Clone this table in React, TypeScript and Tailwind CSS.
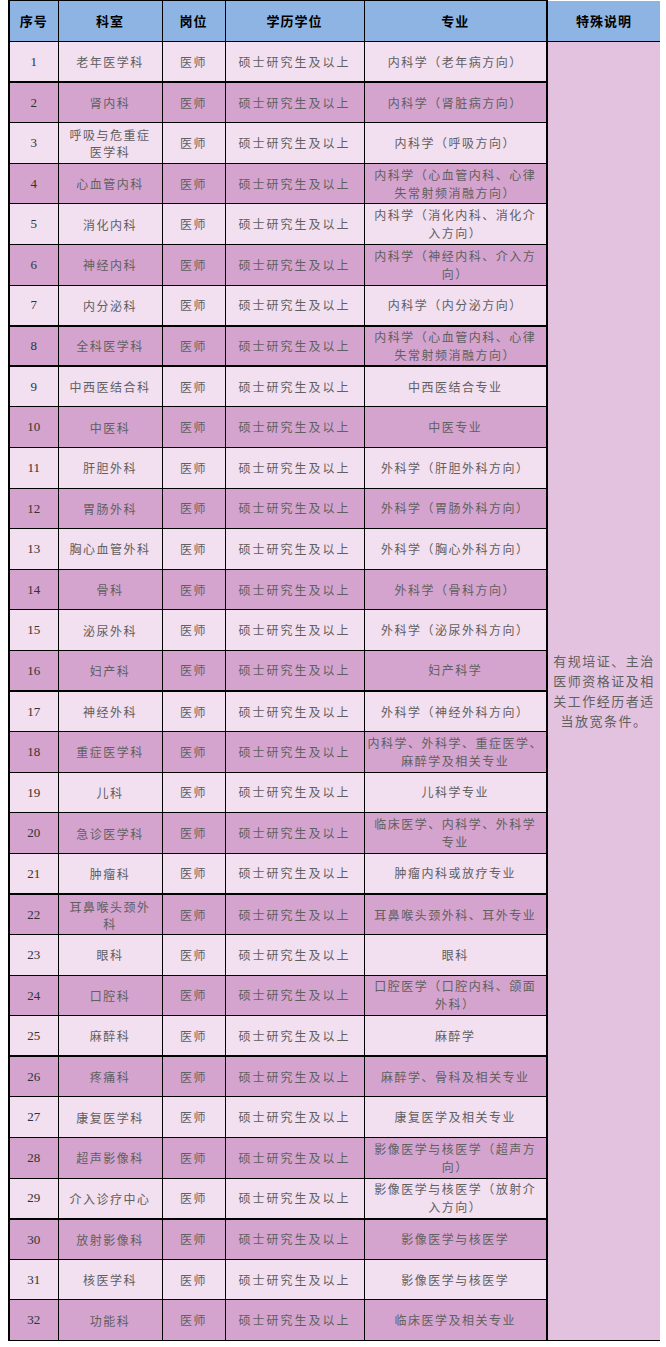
import React from "react"

type Row = { dept: string[]; major: string[] }

const rows: Row[] = [
  { dept: ["老年医学科"], major: ["内科学（老年病方向）"] },
  { dept: ["肾内科"], major: ["内科学（肾脏病方向）"] },
  { dept: ["呼吸与危重症", "医学科"], major: ["内科学（呼吸方向）"] },
  { dept: ["心血管内科"], major: ["内科学（心血管内科、心律", "失常射频消融方向）"] },
  { dept: ["消化内科"], major: ["内科学（消化内科、消化介", "入方向）"] },
  { dept: ["神经内科"], major: ["内科学（神经内科、介入方", "向）"] },
  { dept: ["内分泌科"], major: ["内科学（内分泌方向）"] },
  { dept: ["全科医学科"], major: ["内科学（心血管内科、心律", "失常射频消融方向）"] },
  { dept: ["中西医结合科"], major: ["中西医结合专业"] },
  { dept: ["中医科"], major: ["中医专业"] },
  { dept: ["肝胆外科"], major: ["外科学（肝胆外科方向）"] },
  { dept: ["胃肠外科"], major: ["外科学（胃肠外科方向）"] },
  { dept: ["胸心血管外科"], major: ["外科学（胸心外科方向）"] },
  { dept: ["骨科"], major: ["外科学（骨科方向）"] },
  { dept: ["泌尿外科"], major: ["外科学（泌尿外科方向）"] },
  { dept: ["妇产科"], major: ["妇产科学"] },
  { dept: ["神经外科"], major: ["外科学（神经外科方向）"] },
  { dept: ["重症医学科"], major: ["内科学、外科学、重症医学、", "麻醉学及相关专业"] },
  { dept: ["儿科"], major: ["儿科学专业"] },
  { dept: ["急诊医学科"], major: ["临床医学、内科学、外科学", "专业"] },
  { dept: ["肿瘤科"], major: ["肿瘤内科或放疗专业"] },
  { dept: ["耳鼻喉头颈外", "科"], major: ["耳鼻喉头颈外科、耳外专业"] },
  { dept: ["眼科"], major: ["眼科"] },
  { dept: ["口腔科"], major: ["口腔医学（口腔内科、颌面", "外科）"] },
  { dept: ["麻醉科"], major: ["麻醉学"] },
  { dept: ["疼痛科"], major: ["麻醉学、骨科及相关专业"] },
  { dept: ["康复医学科"], major: ["康复医学及相关专业"] },
  { dept: ["超声影像科"], major: ["影像医学与核医学（超声方", "向）"] },
  { dept: ["介入诊疗中心"], major: ["影像医学与核医学（放射介", "入方向）"] },
  { dept: ["放射影像科"], major: ["影像医学与核医学"] },
  { dept: ["核医学科"], major: ["影像医学与核医学"] },
  { dept: ["功能科"], major: ["临床医学及相关专业"] },
]

const thick = new Set([1, 7, 8, 16, 21, 25, 29])

function Lines({ parts }: { parts: string[] }) {
  return (
    <>
      {parts.map((p, i) => (
        <div key={i}>{p}</div>
      ))}
    </>
  )
}

export default function App() {
  const cjk = { fontFamily: '"Noto Sans CJK SC", sans-serif' }
  return (
    <div className="w-[666px] h-[1347px] bg-white pl-2" style={cjk}>
      <table className="table-fixed border-collapse w-[651px] text-[12px] text-[#606060]">
        <colgroup>
          <col className="w-[49px]" />
          <col className="w-[104px]" />
          <col className="w-[63px]" />
          <col className="w-[139px]" />
          <col className="w-[183px]" />
          <col className="w-[113px]" />
        </colgroup>
        <thead>
          <tr className="h-[41px] bg-[#8db4e2] text-black font-bold text-[13px] tracking-[1px]">
            <th className="border border-black border-l-2">序号</th>
            <th className="border border-black">科室</th>
            <th className="border border-black">岗位</th>
            <th className="border border-black">学历学位</th>
            <th className="border border-black">专业</th>
            <th className="border-b border-l-2 border-black">特殊说明</th>
          </tr>
        </thead>
        <tbody>
          {rows.map((r, i) => {
            const n = i + 1
            const bg = n % 2 === 1 ? "bg-[#f2dff0]" : "bg-[#d4a4cf]"
            const b = thick.has(n) ? "border-b-2" : "border-b"
            return (
              <tr key={n} className={`h-[40.6px] ${bg}`}>
                <td
                  className={`border-l-2 border-r ${b} border-black text-center text-[13px] text-[#333]`}
                  style={{ fontFamily: '"Liberation Serif", serif' }}
                >
                  {n}
                </td>
                <td className={`border-r ${b} border-black text-center tracking-[1.5px] leading-[17px]`}>
                  <Lines parts={r.dept} />
                </td>
                <td className={`border-r ${b} border-black text-center tracking-[1.5px]`}>医师</td>
                <td className={`border-r ${b} border-black text-center tracking-[2px]`}>硕士研究生及以上</td>
                <td className={`border-r ${b} border-black text-center tracking-[1.5px] leading-[18px]`}>
                  <Lines parts={r.major} />
                </td>
                {n === 1 && (
                  <td
                    rowSpan={32}
                    className="bg-[#e3c2df] border-l-2 border-b border-black align-middle text-center text-[13px] tracking-[1.5px] leading-[20px] whitespace-nowrap"
                  >
                    <div>有规培证、主治</div>
                    <div>医师资格证及相</div>
                    <div>关工作经历者适</div>
                    <div>当放宽条件。</div>
                  </td>
                )}
              </tr>
            )
          })}
        </tbody>
      </table>
    </div>
  )
}
